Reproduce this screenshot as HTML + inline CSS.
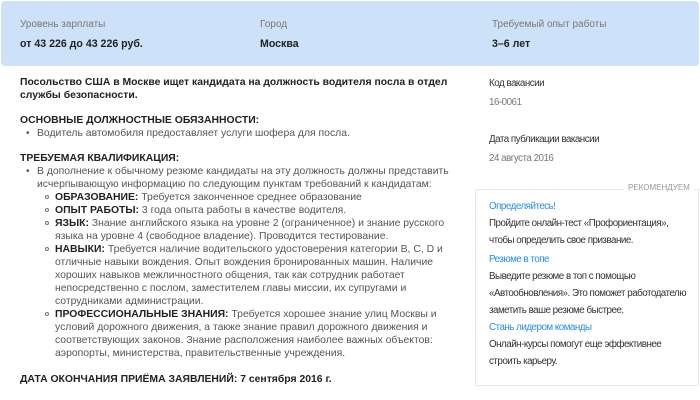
<!DOCTYPE html><html><head><meta charset="utf-8"><style>
*{margin:0;padding:0;box-sizing:border-box}
body{width:700px;height:400px;background:#fff;font-family:"Liberation Sans",Arial,sans-serif;position:relative;overflow:hidden;color:#333}
.hdr{position:absolute;left:1px;top:1px;width:698px;height:65px;background:#cde2f9;border-radius:4px}
.l{position:absolute;white-space:nowrap;font-size:10.4px;line-height:13px}
.b{font-weight:bold;color:#222}
.g{color:#555}
.dot{position:absolute;font-size:10px;line-height:13px;color:#555}
.circ{position:absolute;width:4px;height:4px;border:1px solid #777;border-radius:50%}
.r{position:absolute;white-space:nowrap;font-size:9.8px;letter-spacing:-0.5px;color:#333}
.rg{color:#777}
.box{position:absolute;left:475px;top:189px;width:224px;height:197px;border:1px solid #e8e8e8;border-radius:2px}
.lk{color:#2a8de6}
</style></head><body>
<div class="hdr"></div>
<div class="l" style="left:20px;top:18px;color:#777;font-size:10px">Уровень зарплаты</div>
<div class="l" style="left:260px;top:18px;color:#777;font-size:10px">Город</div>
<div class="l" style="left:492px;top:18px;color:#777;font-size:10px">Требуемый опыт работы</div>
<div class="l b" style="left:20px;top:38px;font-size:10.6px">от 43 226 до 43 226 руб.</div>
<div class="l b" style="left:260px;top:38px;font-size:10.6px">Москва</div>
<div class="l b" style="left:492px;top:38px;font-size:10.6px">3–6 лет</div>

<div class="l b" style="left:20px;top:76px">Посольство США в Москве ищет кандидата на должность водителя посла в отдел</div>
<div class="l b" style="left:20px;top:89px">службы безопасности.</div>
<div class="l b" style="left:20px;top:114px">ОСНОВНЫЕ ДОЛЖНОСТНЫЕ ОБЯЗАННОСТИ:</div>
<div class="dot" style="left:26px;top:127px">•</div>
<div class="l g" style="left:37px;top:127px">Водитель автомобиля предоставляет услуги шофера для посла.</div>
<div class="l b" style="left:20px;top:152px">ТРЕБУЕМАЯ КВАЛИФИКАЦИЯ:</div>
<div class="dot" style="left:26px;top:165px">•</div>
<div class="l g" style="left:37px;top:165px">В дополнение к обычному резюме кандидаты на эту должность должны представить</div>
<div class="l g" style="left:37px;top:178px">исчерпывающую информацию по следующим пунктам требований к кандидатам:</div>
<div class="circ" style="left:45px;top:195px"></div>
<div class="l g" style="left:55px;top:191px"><b style="color:#222">ОБРАЗОВАНИЕ:</b> Требуется законченное среднее образование</div>
<div class="circ" style="left:45px;top:208px"></div>
<div class="l g" style="left:55px;top:204px"><b style="color:#222">ОПЫТ РАБОТЫ:</b> 3 года опыта работы в качестве водителя.</div>
<div class="circ" style="left:45px;top:221px"></div>
<div class="l g" style="left:55px;top:217px"><b style="color:#222">ЯЗЫК:</b> Знание английского языка на уровне 2 (ограниченное) и знание русского</div>
<div class="l g" style="left:55px;top:230px">языка на уровне 4 (свободное владение). Проводится тестирование.</div>
<div class="circ" style="left:45px;top:247px"></div>
<div class="l g" style="left:55px;top:243px"><b style="color:#222">НАВЫКИ:</b> Требуется наличие водительского удостоверения категории B, C, D и</div>
<div class="l g" style="left:55px;top:256px">отличные навыки вождения. Опыт вождения бронированных машин. Наличие</div>
<div class="l g" style="left:55px;top:269px">хороших навыков межличностного общения, так как сотрудник работает</div>
<div class="l g" style="left:55px;top:282px">непосредственно с послом, заместителем главы миссии, их супругами и</div>
<div class="l g" style="left:55px;top:295px">сотрудниками администрации.</div>
<div class="circ" style="left:45px;top:312px"></div>
<div class="l g" style="left:55px;top:308px"><b style="color:#222">ПРОФЕССИОНАЛЬНЫЕ ЗНАНИЯ:</b> Требуется хорошее знание улиц Москвы и</div>
<div class="l g" style="left:55px;top:321px">условий дорожного движения, а также знание правил дорожного движения и</div>
<div class="l g" style="left:55px;top:334px">соответствующих законов. Знание расположения наиболее важных объектов:</div>
<div class="l g" style="left:55px;top:347px">аэропорты, министерства, правительственные учреждения.</div>
<div class="l b" style="left:20px;top:373px">ДАТА ОКОНЧАНИЯ ПРИЁМА ЗАЯВЛЕНИЙ: 7 сентября 2016 г.</div>

<div class="r" style="left:489px;top:78px">Код вакансии</div>
<div class="r rg" style="left:489px;top:97px">16-0061</div>
<div class="r" style="left:489px;top:134px">Дата публикации вакансии</div>
<div class="r rg" style="left:489px;top:153px">24 августа 2016</div>
<div class="box"></div>
<div class="r" style="left:624px;top:183px;font-size:8px;letter-spacing:0;color:#999;background:#fff;padding:0 4px">РЕКОМЕНДУЕМ</div>
<div class="r lk" style="left:489px;top:201px">Определяйтесь!</div>
<div class="r" style="left:489px;top:218px">Пройдите онлайн-тест «Профориентация»,</div>
<div class="r" style="left:489px;top:235px">чтобы определить свое призвание.</div>
<div class="r lk" style="left:489px;top:254px">Резюме в топе</div>
<div class="r" style="left:489px;top:271px">Выведите резюме в топ с помощью</div>
<div class="r" style="left:489px;top:288px">«Автообновления». Это поможет работодателю</div>
<div class="r" style="left:489px;top:305px">заметить ваше резюме быстрее.</div>
<div class="r lk" style="left:489px;top:322px">Стань лидером команды</div>
<div class="r" style="left:489px;top:339px">Онлайн-курсы помогут еще эффективнее</div>
<div class="r" style="left:489px;top:356px">строить карьеру.</div>
</body></html>
